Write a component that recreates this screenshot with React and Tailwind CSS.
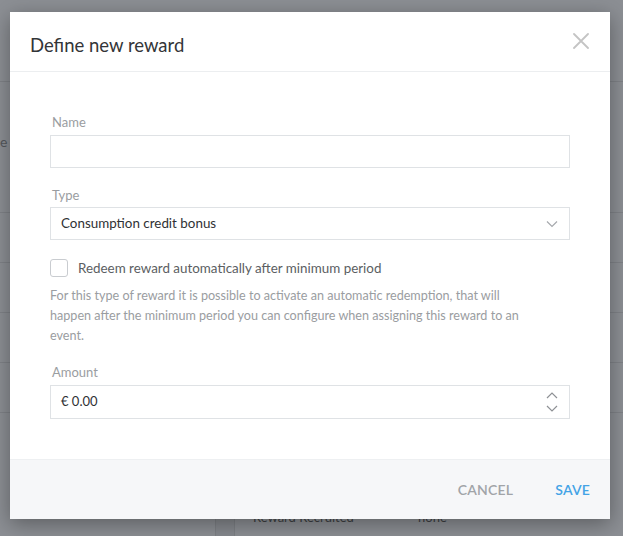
import React from "react";

export default function App() {
  return (
    <div className="relative w-[623px] h-[536px] overflow-hidden bg-[#8c8f94]" style={{ fontFamily: "Lato, 'Noto Sans', sans-serif" }}>
      {/* background page hints */}
      <div className="flex flex-col">
        <div className="h-[82px] border-b border-[#7f8287]" />
        <div className="h-[131px] border-b border-[#7f8287] pt-[50px] text-[14px] text-[#55585c] leading-[20px]">e r</div>
        <div className="h-[50px] border-b border-[#7f8287]" />
        <div className="h-[50px] border-b border-[#7f8287]" />
        <div className="h-[50px] border-b border-[#7f8287]" />
        <div className="h-[50px] border-b border-[#7f8287]" />
        <div className="h-[95px]" />
        <div className="flex h-[30px]">
          <div className="w-[215px]" />
          <div className="w-[20px] bg-[#86898e] border-x border-[#7d8085]" />
          <div className="pl-[18px] w-[183px] text-[13px] text-[#3d3f42]">Reward Recruited</div>
          <div className="text-[13px] text-[#3d3f42]">none</div>
        </div>
      </div>

      {/* modal */}
      <div className="absolute left-[10px] top-[12px] w-[600px] h-[507px] bg-white flex flex-col shadow-[0_5px_20px_rgba(0,0,0,0.35)]">
        <div className="h-[60px] flex items-center justify-between pl-[20px] pr-[21px] border-b border-[#eceef0]">
          <div className="text-[18.5px] text-[#333538] pt-[8px]">Define new reward</div>
          <svg width="16" height="16" viewBox="0 0 16 16" className="mt-[-1px]">
            <path d="M1 1 L15 15 M15 1 L1 15" stroke="#c4c4c4" strokeWidth="1.8" strokeLinecap="round" />
          </svg>
        </div>

        <div className="flex-1 px-[40px] pt-[41px]">
          <div className="text-[13px] text-[#9a9da1] pl-[2px] leading-[18px]">Name</div>
          <div className="mt-[4px] h-[33px] border border-[#dfe2e5]" />

          <div className="mt-[18px] text-[13px] text-[#9a9da1] pl-[2px] leading-[18px]">Type</div>
          <div className="mt-[3px] h-[33px] border border-[#dfe2e5] flex items-center justify-between pl-[10px] pr-[11px]">
            <span className="text-[13.4px] text-[#2f3134]">Consumption credit bonus</span>
            <svg width="12" height="8" viewBox="0 0 12 8">
              <path d="M1 1.5 L6 6.5 L11 1.5" stroke="#a6a9ad" strokeWidth="1.2" fill="none" />
            </svg>
          </div>

          <div className="mt-[18px] flex items-center gap-[10px]">
            <div className="w-[18px] h-[18px] border border-[#c9ccd0] rounded-[3px]" />
            <span className="text-[13.4px] text-[#5b5e62]">Redeem reward automatically after minimum period</span>
          </div>

          <p className="mt-[8px] w-[482px] text-[12.6px] leading-[20px] text-[#9a9da1]">
            For this type of reward it is possible to activate an automatic redemption, that will happen after the minimum period you can configure when assigning this reward to an event.
          </p>

          <div className="mt-[17px] text-[13px] text-[#9a9da1] pl-[2px] leading-[18px]">Amount</div>
          <div className="mt-[4px] h-[34px] border border-[#dfe2e5] flex items-center justify-between pl-[10px] pr-[11px]">
            <span className="text-[13px] text-[#2f3134]">€ 0.00</span>
            <div className="flex flex-col gap-[6px]">
              <svg width="12" height="7" viewBox="0 0 12 7">
                <path d="M1 6 L6 1 L11 6" stroke="#8e9195" strokeWidth="1.2" fill="none" />
              </svg>
              <svg width="12" height="7" viewBox="0 0 12 7">
                <path d="M1 1 L6 6 L11 1" stroke="#8e9195" strokeWidth="1.2" fill="none" />
              </svg>
            </div>
          </div>
        </div>

        <div className="h-[60px] bg-[#f6f7f9] border-t border-[#eef0f2] flex items-center justify-end gap-[42px] pr-[20px]">
          <span className="text-[14px] font-semibold text-[#a1a4a8] tracking-[0.2px]">CANCEL</span>
          <span className="text-[14px] font-semibold text-[#43a3e6] tracking-[0.2px]">SAVE</span>
        </div>
      </div>
    </div>
  );
}
